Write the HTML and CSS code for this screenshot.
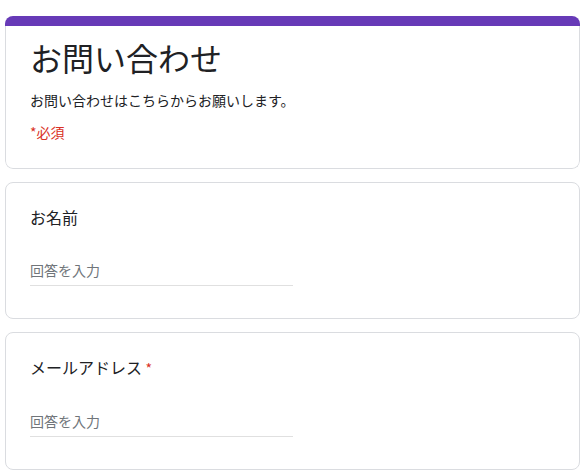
FILE: index.html
```html
<!DOCTYPE html>
<html lang="ja">
<head>
<meta charset="utf-8">
<title>お問い合わせ</title>
<link rel="stylesheet" href="styles.css">
</head>
<body>
<main class="form">
  <section class="card header-card">
    <div class="bar"></div>
    <div class="header-body">
      <h1 class="title">お問い合わせ</h1>
      <p class="desc">お問い合わせはこちらからお願いします。</p>
      <p class="required-note">*必須</p>
    </div>
  </section>
  <section class="card question">
    <div class="label">お名前</div>
    <div class="answer">回答を入力</div>
  </section>
  <section class="card question">
    <div class="label">メールアドレス <span class="star">*</span></div>
    <div class="answer">回答を入力</div>
  </section>
</main>
</body>
</html>
```
FILE: styles.css
```css
html, body {
  margin: 0;
  padding: 0;
  background: #ffffff;
}
body {
  font-family: "Noto Sans CJK JP", "Noto Sans", sans-serif;
  color: #202124;
}
.form {
  display: flex;
  flex-direction: column;
  gap: 13px;
  padding: 16px 7px 0 5px;
}
.card {
  box-sizing: border-box;
  border-radius: 8px;
  background: #fff;
}
.header-card {
  overflow: hidden;
}
.bar {
  height: 10px;
  background: #673ab7;
}
.header-body {
  border: 1px solid #dadce0;
  border-top: none;
  border-radius: 0 0 8px 8px;
  padding: 11px 24px 26px 24px;
}
.title {
  margin: 0;
  font-size: 32px;
  font-weight: 400;
  line-height: 40px;
  letter-spacing: 0;
}
.desc {
  margin: 13px 0 0 0;
  font-size: 14px;
  line-height: 20px;
}
.required-note {
  margin: 12px 0 0 0;
  font-size: 14px;
  line-height: 20px;
  color: #d93025;
}
.question {
  border: 1px solid #dadce0;
  padding: 22px 24px 32px 24px;
}
.label {
  font-size: 16px;
  line-height: 24px;
}
.star {
  color: #d93025;
  font-size: 14px;
}
.answer {
  margin-top: 31px;
  width: 50%;
  font-size: 14px;
  line-height: 20px;
  color: #70757a;
  padding-bottom: 5px;
  border-bottom: 1px solid #e0e0e0;
}
```
